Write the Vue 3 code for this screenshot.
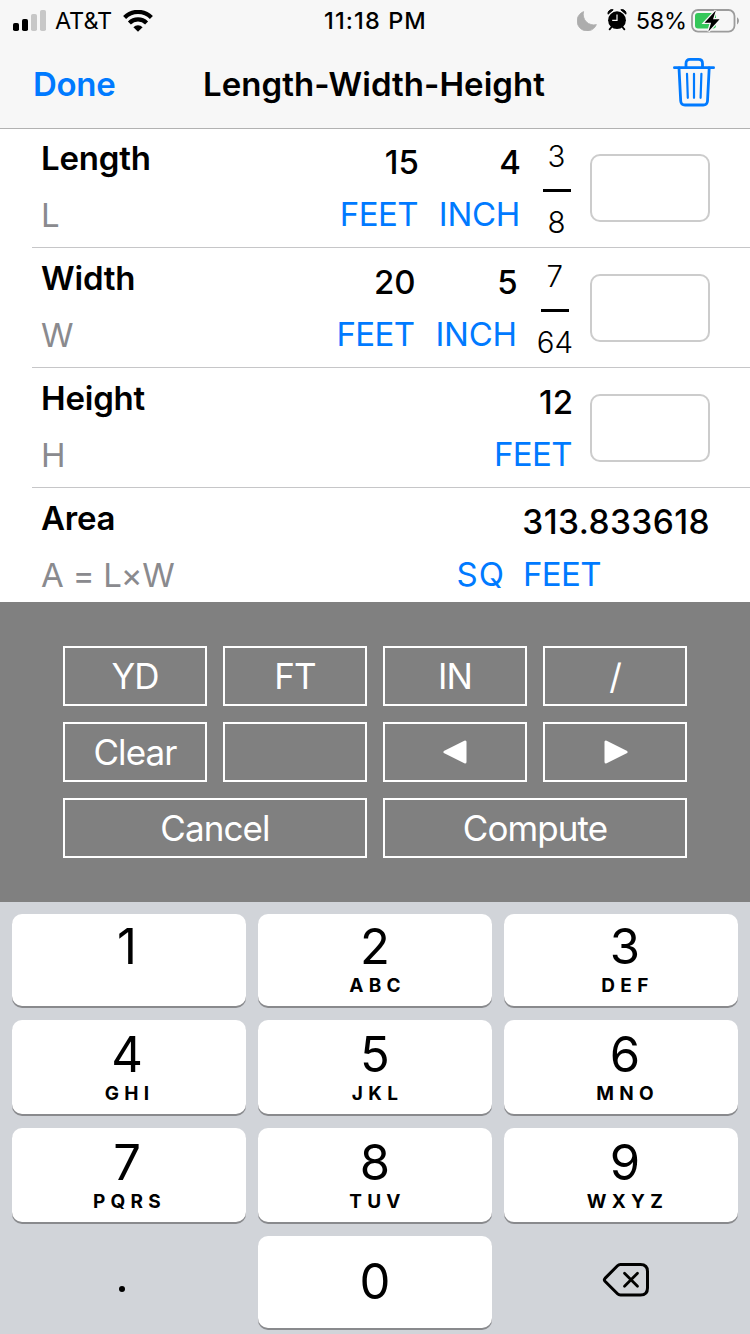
<template>
  <div class="screen">
    <header class="top">
      <div class="status-bar">
        <div class="status-left">
          <svg class="signal" width="34" height="22" viewBox="0 0 34 22">
            <rect x="0" y="13" width="6" height="8" rx="1.8" fill="#000" />
            <rect x="9" y="9" width="6" height="12" rx="1.8" fill="#000" />
            <rect x="18" y="4" width="6" height="17" rx="1.8" fill="#c7c7c7" />
            <rect x="27" y="0" width="6" height="21" rx="1.8" fill="#c7c7c7" />
          </svg>
          <span class="carrier">AT&amp;T</span>
          <svg class="wifi" width="30" height="22" viewBox="0 0 30 22">
            <path d="M1.600 7.400a19 19 0 0 1 26.800 0" fill="none" stroke="#000" stroke-width="4.200" />
            <path d="M6.400 13a12.200 12.200 0 0 1 17.200 0" fill="none" stroke="#000" stroke-width="4.200" />
            <path d="M10.400 17.200a6.600 6.600 0 0 1 9.200 0L15 21.800z" fill="#000" />
          </svg>
        </div>
        <span class="time">11:18 PM</span>
        <div class="status-right">
          <svg class="moon" width="20" height="20" viewBox="0 0 20 20">
            <path d="M6.600.6A10 10 0 1 0 19.400 13.600 10.600 10.600 0 0 1 6.600.6z" fill="#adadad" stroke="#adadad" stroke-width=".8" />
          </svg>
          <svg class="alarm" width="20" height="22" viewBox="0 0 20 22">
            <circle cx="10" cy="11.200" r="8.900" fill="#000" />
            <path d="M1 5.200A4 4 0 0 1 6.200.8zM19 5.200A4 4 0 0 0 13.800.8z" fill="#000" stroke="#000" stroke-linejoin="round" />
            <path d="M4.600 18l-2 2.400M15.400 18l2 2.400" stroke="#000" stroke-width="1.800" stroke-linecap="round" />
            <path d="M10 5.400v6H5.200" fill="none" stroke="#f7f7f7" stroke-width="1.200" />
          </svg>
          <span class="percent">58%</span>
          <svg class="battery" width="48" height="24" viewBox="0 0 48 24">
            <rect x="1" y="1" width="42.500" height="21.600" rx="6" fill="none" stroke="#9c9c9c" stroke-width="1.800" />
            <path d="M46 8.200c2.600 1.400 2.600 5.800 0 7.200z" fill="#9c9c9c" />
            <rect x="4" y="4" width="21" height="15.600" rx="3" fill="#34c759" />
            <path d="M24.800 1.600L13.500 13.800h6.600L17.400 22.400 28.600 10.200H22z" fill="#000" stroke="#f7f7f7" stroke-width="2.600" />
            <path d="M24.800 1.600L13.500 13.800h6.600L17.400 22.400 28.600 10.200H22z" fill="#000" />
          </svg>
        </div>
      </div>
      <div class="nav-bar">
        <a class="done" href="javascript:;">Done</a>
        <h1 class="title">Length-Width-Height</h1>
        <svg class="trash" width="42" height="50" viewBox="0 0 42 50" fill="none" stroke="#007aff" stroke-linecap="round">
          <path d="M1.400 10.700h39.200" stroke-width="2.800" />
          <path d="M13 10V6.400q0-4 4-4h8.500q4 0 4 4V10" stroke-width="2.800" />
          <path d="M6 11l1.700 33q.3 4 4.300 4h18.200q4 0 4.300-4L36.200 11" stroke-width="2.800" />
          <path d="M14 16.800l.8 24M21 16.800v24M28.400 16.800l-.8 24" stroke-width="2.200" />
        </svg>
      </div>
    </header>

    <main class="list">
      <section v-for="row in rows" :key="row.name" class="row">
        <div class="names">
          <div class="name">{{ row.name }}</div>
          <div class="symbol">{{ row.symbol }}</div>
        </div>
        <div class="values">
          <div v-for="item in row.values" :key="item.unit" class="value">
            <div class="number">{{ item.number }}</div>
            <div class="unit" :class="item.unit.toLowerCase()">{{ item.unit }}</div>
          </div>
        </div>
        <div v-if="row.fraction" class="fraction">
          <span>{{ row.fraction[0] }}</span>
          <i class="bar"></i>
          <span>{{ row.fraction[1] }}</span>
        </div>
        <input class="field" type="text" />
      </section>

      <section class="row result">
        <div class="names">
          <div class="name">Area</div>
          <div class="symbol">A = L×W</div>
        </div>
        <div class="area">
          <div class="number total">313.833618</div>
          <div class="area-units">
            <span class="unit sq">SQ</span>
            <span class="unit feet">FEET</span>
          </div>
        </div>
      </section>
    </main>

    <section class="tools">
      <button class="tool">YD</button>
      <button class="tool">FT</button>
      <button class="tool">IN</button>
      <button class="tool">/</button>
      <button class="tool">Clear</button>
      <button class="tool"></button>
      <button class="tool">
        <svg width="24" height="24" viewBox="0 0 24 24">
          <path d="M2 12L22 2v20z" fill="#fff" stroke="#fff" stroke-width="3" stroke-linejoin="round" />
        </svg>
      </button>
      <button class="tool">
        <svg class="next" width="24" height="24" viewBox="0 0 24 24">
          <path d="M22 12L2 2v20z" fill="#fff" stroke="#fff" stroke-width="3" stroke-linejoin="round" />
        </svg>
      </button>
      <button class="tool wide">Cancel</button>
      <button class="tool wide">Compute</button>
    </section>

    <section class="keyboard">
      <button v-for="key in keys" :key="key.digit" class="key">
        <span class="digit">{{ key.digit }}</span>
        <span class="letters">{{ key.letters }}</span>
      </button>
      <button class="key plain"><i class="dot"></i></button>
      <button class="key zero"><span class="digit">0</span></button>
      <button class="key plain">
        <svg class="backspace" width="48" height="36" viewBox="0 0 48 36" fill="none" stroke="#000" stroke-linecap="round" stroke-linejoin="round">
          <path d="M18.500 2.500H38.500q7 0 7 7v16.500q0 7-7 7H18.500q-1.800 0-3-1.200L3 19.200q-1.300-1.400 0-2.800L15.500 3.700q1.200-1.200 3-1.200z" stroke-width="3" />
          <path d="M22.500 11.200l13 13M35.500 11.200l-13 13" stroke-width="2.800" />
        </svg>
      </button>
    </section>
  </div>
</template>

<script setup>
const rows = [
  {
    name: 'Length',
    symbol: 'L',
    values: [{ number: '15', unit: 'FEET' }, { number: '4', unit: 'INCH' }],
    fraction: ['3', '8']
  },
  {
    name: 'Width',
    symbol: 'W',
    values: [{ number: '20', unit: 'FEET' }, { number: '5', unit: 'INCH' }],
    fraction: ['7', '64']
  },
  {
    name: 'Height',
    symbol: 'H',
    values: [{ number: '12', unit: 'FEET' }]
  }
];

const keys = [
  { digit: '1', letters: '' },
  { digit: '2', letters: 'ABC' },
  { digit: '3', letters: 'DEF' },
  { digit: '4', letters: 'GHI' },
  { digit: '5', letters: 'JKL' },
  { digit: '6', letters: 'MNO' },
  { digit: '7', letters: 'PQRS' },
  { digit: '8', letters: 'TUV' },
  { digit: '9', letters: 'WXYZ' }
];
</script>

<style>
body {
  margin: 0;
  background: #fff;
}
</style>

<style scoped>
* {
  box-sizing: border-box;
}

.screen {
  width: 750px;
  height: 1334px;
  display: flex;
  flex-direction: column;
  overflow: hidden;
  font-family: Inter, "Liberation Sans", sans-serif;
  color: #000;
}

button {
  margin: 0;
  padding: 0;
  border: none;
  font-family: inherit;
}

svg {
  display: block;
  flex: none;
}

/* 状态栏与导航栏 */
.top {
  height: 128px;
  flex: none;
  background: #f7f7f7;
  box-shadow: 0 1px 0 #b2b2b2;
  z-index: 1;
}

.status-bar {
  height: 40px;
  display: grid;
  grid-template-columns: 1fr auto 1fr;
  align-items: center;
  padding: 0 11px 0 13px;
  font-size: 23.5px;
  line-height: 40px;
}

.status-left,
.status-right {
  display: flex;
  align-items: center;
}

.status-right {
  justify-content: flex-end;
}

.carrier {
  width: 58px;
  margin: 1px 0 0 8px;
  font-weight: 400;
  letter-spacing: -0.1px;
}

.wifi {
  margin-left: 10px;
}

.time {
  margin: 1px 0 0 -1px;
  font-weight: 500;
  letter-spacing: 1.1px;
}

.moon {
  margin-top: 1px;
}

.alarm {
  margin: -1px 0 0 10px;
}

.percent {
  margin: 1px 4px 0 9px;
  font-weight: 400;
  letter-spacing: -0.2px;
}

.nav-bar {
  height: 88px;
  display: grid;
  grid-template-columns: 1fr auto 1fr;
  align-items: center;
  padding: 0 35px 0 33px;
}

.done {
  color: #007aff;
  font-size: 33px;
  font-weight: 600;
  letter-spacing: -0.3px;
  text-decoration: none;
}

.title {
  margin: 0;
  font-size: 33px;
  font-weight: 600;
  letter-spacing: 0.05px;
}

.trash {
  justify-self: end;
  margin-top: -4px;
}

/* 数值列表 */
.list {
  height: 474px;
  flex: none;
  background: #fff;
}

.row {
  height: 120px;
  display: flex;
  margin-left: 32px;
  padding: 0 40px 0 9px;
  border-bottom: 1px solid #c6c6c8;
}

.result {
  border-bottom: none;
}

.names {
  flex: 1;
  padding-top: 10px;
}

.name {
  font-size: 33px;
  line-height: 40px;
  font-weight: 600;
  letter-spacing: -0.2px;
}

.symbol {
  margin-top: 17px;
  font-size: 33px;
  line-height: 40px;
  color: #8a8a8e;
  letter-spacing: -0.2px;
}

.values {
  display: flex;
  gap: 20px;
  padding-top: 14px;
  text-align: right;
}

.number {
  font-size: 33px;
  line-height: 40px;
  font-weight: 500;
}

.total {
  font-size: 33.5px;
  letter-spacing: 0.4px;
}

.unit {
  margin-top: 12px;
  font-size: 33px;
  line-height: 40px;
  color: #007aff;
}

.feet {
  letter-spacing: -0.6px;
}

.value .feet {
  padding-right: 1px;
}

.inch {
  padding-right: 1px;
  letter-spacing: -0.3px;
}

.sq {
  letter-spacing: 1px;
}

.fraction {
  display: flex;
  flex-direction: column;
  align-items: center;
  min-width: 33px;
  margin-left: 19px;
  padding-top: 10px;
  font-size: 29.5px;
  line-height: 36px;
  font-weight: 300;
}

.bar {
  width: 28px;
  height: 3px;
  margin: 15px 0 12px;
  background: #000;
}

.field {
  width: 120px;
  height: 68px;
  margin: 26px 0 0 17px;
  padding: 0 12px;
  border: 2px solid #ccc;
  border-radius: 10px;
  background: #fff;
  font-size: 33px;
}

.area {
  padding-top: 14px;
  text-align: right;
}

.area-units {
  display: flex;
  justify-content: flex-end;
  gap: 18px;
  padding-right: 109px;
}

/* 单位与操作按钮 */
.tools {
  height: 300px;
  flex: none;
  display: grid;
  grid-template-columns: repeat(4, 144px);
  grid-auto-rows: 60px;
  gap: 16px;
  justify-content: center;
  align-content: start;
  padding-top: 44px;
  background: #808080;
}

.tool {
  display: flex;
  align-items: center;
  justify-content: center;
  border: 2px solid #fff;
  background: none;
  color: #fff;
  font-size: 35px;
  font-weight: 400;
  letter-spacing: -0.9px;
}

.next {
  margin-left: 1px;
}

.wide {
  grid-column: span 2;
}

/* 数字键盘 */
.keyboard {
  flex: 1;
  display: grid;
  grid-template-columns: repeat(3, 234px);
  grid-template-rows: 92px 94px 94px 92px;
  column-gap: 12px;
  row-gap: 14px;
  justify-content: center;
  align-content: start;
  padding-top: 12px;
  background: #d1d4d9;
}

.key {
  display: flex;
  flex-direction: column;
  align-items: center;
  justify-content: flex-end;
  padding-bottom: 8px;
  border-radius: 10px;
  background: #fff;
  box-shadow: 0 2px 0 #898a8d;
  color: #000;
}

.key:nth-child(3n + 1) {
  padding-right: 4px;
}

.key:nth-child(3n) {
  padding-left: 8px;
}

.digit {
  font-size: 49px;
  line-height: 54px;
}

.letters {
  height: 24px;
  font-size: 19px;
  line-height: 24px;
  font-weight: 700;
  letter-spacing: 5.3px;
  margin-right: -5px;
}

.key.zero {
  justify-content: center;
  padding: 0 0 1px;
}

.key.plain {
  justify-content: center;
  padding: 0;
  background: none;
  box-shadow: none;
}

.dot {
  width: 6px;
  height: 6px;
  margin: 14px 14px 0 0;
  border-radius: 50%;
  background: #000;
}

.backspace {
  margin: 0 0 4px 10px;
}
</style>
